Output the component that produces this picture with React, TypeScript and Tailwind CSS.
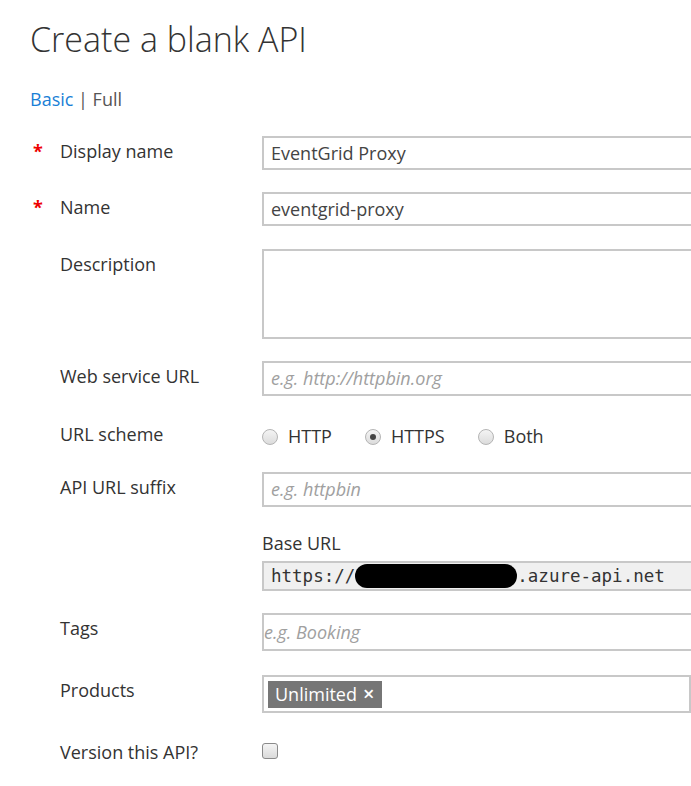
import React from "react";

const font = { fontFamily: '"Open Sans", "Noto Sans", sans-serif' };

function Label({ text, required }: { text: string; required?: boolean }) {
  return (
    <div className="relative w-[262px] shrink-0 pl-[60px] pt-[3px] text-[18px] leading-[24px] text-[#333]">
      {required && (
        <span className="absolute left-[33px] top-[3px] text-[18px] font-bold text-[#e00]">*</span>
      )}
      {text}
    </div>
  );
}

function TextBox({ value, placeholder, h = "h-[34px]", noPad }: { value?: string; placeholder?: string; h?: string; noPad?: boolean }) {
  return (
    <div
      className={`${h} w-[480px] shrink-0 border-2 border-[#c8c8c8] bg-white ${noPad ? "pl-0" : "pl-[7px]"} flex items-center text-[18px]`}
    >
      {value ? (
        <span className="text-[#444]">{value}</span>
      ) : (
        <span className="italic text-[#a0a0a0]">{placeholder}</span>
      )}
    </div>
  );
}

function Radio({ checked, label }: { checked?: boolean; label: string }) {
  return (
    <div className="flex items-center">
      <span className="flex h-[16px] w-[16px] items-center justify-center rounded-full border border-[#b4b4b4] bg-gradient-to-b from-[#f4f4f4] to-[#dcdcdc]">
        {checked && <span className="h-[6px] w-[6px] rounded-full bg-[#444]" />}
      </span>
      <span className="ml-[10px] text-[18px] text-[#333]">{label}</span>
    </div>
  );
}

export default function App() {
  return (
    <div className="h-[786px] w-[691px] overflow-hidden bg-white" style={font}>
      <div className="pl-[30px] pt-[16px]">
        <h1 className="text-[34px] font-light leading-[46px] text-[#333]">Create a blank API</h1>
        <div className="mt-[25px] text-[18px] leading-[24px]">
          <span className="text-[#1a7fd6]">Basic</span>
          <span className="text-[#555]"> | Full</span>
        </div>
      </div>

      <div className="mt-[25px] flex flex-col">
        <div className="flex">
          <Label text="Display name" required />
          <TextBox value="EventGrid Proxy" />
        </div>
        <div className="mt-[22px] flex">
          <Label text="Name" required />
          <TextBox value="eventgrid-proxy" />
        </div>
        <div className="mt-[23px] flex">
          <Label text="Description" />
          <TextBox h="h-[90px]" />
        </div>
        <div className="mt-[22px] flex">
          <Label text="Web service URL" />
          <TextBox h="h-[35px]" placeholder="e.g. http://httpbin.org" />
        </div>
        <div className="mt-[23px] flex h-[34px]">
          <Label text="URL scheme" />
          <div className="flex items-start gap-[33px] pt-[4px]">
            <Radio label="HTTP" />
            <Radio label="HTTPS" checked />
            <Radio label="Both" />
          </div>
        </div>
        <div className="mt-[19px] flex">
          <Label text="API URL suffix" />
          <TextBox h="h-[35px]" placeholder="e.g. httpbin" />
        </div>
        <div className="mt-[24px] flex">
          <div className="w-[262px] shrink-0" />
          <div className="flex flex-col">
            <div className="text-[18px] leading-[24px] text-[#333]">Base URL</div>
            <div className="mt-[6px] flex h-[30px] w-[480px] items-center border-2 border-[#c8c8c8] bg-[#f0f0f0] pl-[7px] text-[17.5px] text-[#333]" style={{ fontFamily: '"DejaVu Sans Mono", "Liberation Mono", monospace' }}>
              <span>https://</span>
              <span className="h-[24px] w-[162px] shrink-0 rounded-full bg-black" />
              <span>.azure-api.net</span>
            </div>
          </div>
        </div>
        <div className="mt-[22px] flex">
          <Label text="Tags" />
          <TextBox h="h-[38px]" placeholder="e.g. Booking" noPad />
        </div>
        <div className="mt-[24px] flex">
          <Label text="Products" />
          <div className="flex h-[38px] w-[480px] items-center border-2 border-[#c8c8c8] bg-white pl-[4px]">
            <span className="flex h-[27px] items-center bg-[#767676] pl-[7px] pr-[8px] text-[18px] text-white">
              Unlimited <span className="ml-[6px] text-[20px] font-semibold leading-none">×</span>
            </span>
          </div>
        </div>
        <div className="mt-[24px] flex">
          <Label text="Version this API?" />
          <div className="pt-[6px]">
            <span className="block h-[16px] w-[16px] rounded-[3px] border border-[#8a8a8a] bg-gradient-to-b from-[#f4f4f4] to-[#dadada]" />
          </div>
        </div>
      </div>
    </div>
  );
}
